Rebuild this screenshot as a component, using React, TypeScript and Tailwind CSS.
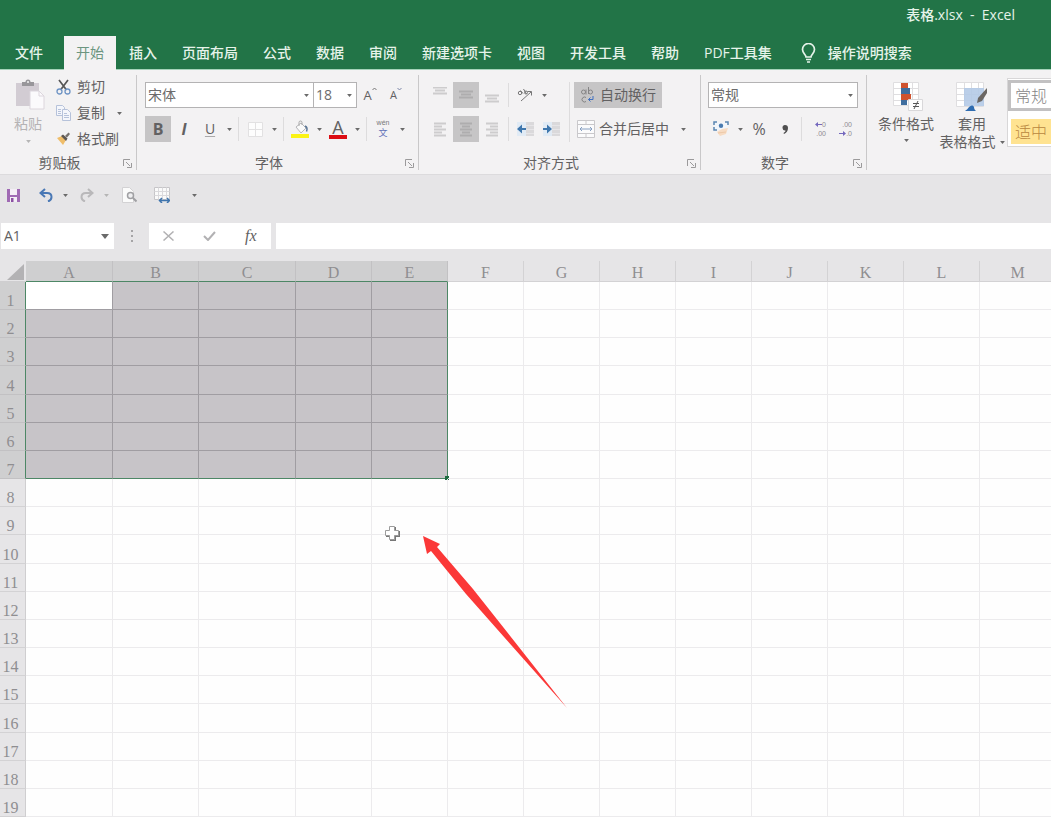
import { useState, type ReactNode } from "react";
import clsx from "clsx";

const TABS = ["插入", "页面布局", "公式", "数据", "审阅", "新建选项卡", "视图", "开发工具", "帮助", "PDF工具集"];

const COLUMNS = [
  { name: "A", width: 87 },
  { name: "B", width: 86 },
  { name: "C", width: 97 },
  ...["D", "E", "F", "G", "H", "I", "J", "K", "L", "M"].map((name) => ({ name, width: 76 })),
];

const ROWS = Array.from({ length: 19 }, (_, i) => i + 1);
const LAST_COL = 4;
const LAST_ROW = 7;

function Arrow({ big, light }: { big?: boolean; light?: boolean }) {
  return (
    <svg
      width={big ? 8 : 5}
      height={big ? 5 : 3}
      viewBox="0 0 8 5"
      className={clsx("shrink-0", light ? "fill-[#b5b5b5]" : "fill-[#6a6a6a]")}
    >
      <path d="M0 0h8L4 5z" />
    </svg>
  );
}

function DropButton({ label, light }: { label: string; light?: boolean }) {
  return (
    <button type="button" aria-label={label} className="flex h-[26px] w-3 items-center justify-center">
      <Arrow light={light} />
    </button>
  );
}

function IconButton({ label, active, children }: { label: string; active?: boolean; children: ReactNode }) {
  return (
    <button
      type="button"
      aria-label={label}
      className={clsx("flex h-[26px] w-[26px] shrink-0 items-center justify-center", active && "bg-[#c6c5c6]")}
    >
      {children}
    </button>
  );
}

function Sep({ tall }: { tall?: boolean }) {
  return <span className={clsx("mx-[3px] w-px shrink-0 bg-[#dddcdd]", tall ? "h-15" : "h-6")} />;
}

function ComboBox({ label, initial, className }: { label: string; initial: string; className: string }) {
  const [value, setValue] = useState(initial);
  return (
    <div className={clsx("flex h-[26px] items-center border border-[#b4b3b4] bg-white pr-0.5", className)}>
      <input
        aria-label={label}
        value={value}
        onChange={(e) => setValue(e.target.value)}
        className="w-full min-w-0 bg-transparent px-0.5 text-sm text-[#6c6b6c] outline-none"
      />
      <button type="button" aria-label={`${label}列表`} className="px-0.5">
        <Arrow />
      </button>
    </div>
  );
}

function Group({ title, className, children }: { title: string; className: string; children: ReactNode }) {
  return (
    <section className={clsx("flex shrink-0 flex-col pt-3", className)}>
      <div className="h-[73px]">{children}</div>
      <div className="flex h-[22px] items-center pr-px">
        <span className="flex-1 text-center">{title}</span>
        <button type="button" aria-label={`${title}设置`} className="flex w-4 justify-center">
          <svg width="9" height="9" viewBox="0 0 9 9" fill="none" stroke="#9b9a9b">
            <path d="M.5 7V.5H7M3 3l4 4" />
            <path d="M8.500 4v4.500H4" />
          </svg>
        </button>
      </div>
    </section>
  );
}

function GroupLine() {
  return <span className="mt-[5px] h-[95px] w-px shrink-0 bg-[#c9c8c9]" />;
}

function Lines({ rows, color = "#cdcccd" }: { rows: number[][]; color?: string }) {
  return (
    <svg width="14" height="16" viewBox="0 0 14 16" stroke={color} strokeWidth="2">
      {rows.map(([x1, x2, y]) => (
        <path key={y} d={`M${x1} ${y}.500H${x2}`} />
      ))}
    </svg>
  );
}

function ClipboardGroup() {
  return (
    <Group title="剪贴板" className="w-[136px]">
      <div className="-mt-2 flex">
        <button type="button" className="flex w-[56px] flex-col items-center pt-1 text-[#b5b3b5]">
          <svg width="30" height="32" viewBox="0 0 30 32" className="ml-1">
            <path d="M1 5h23v23H1z" fill="#d2ccd3" />
            <path d="M7 8V4h3.500a2.500 2.500 0 0 1 5 0H19v4z" fill="#98969a" />
            <circle cx="13" cy="4" r="1" fill="#f2f2f2" />
            <path d="M15 13h9l5 5v13H15z" fill="#fbfafc" stroke="#dcd6dd" />
            <path d="M24 13v5h5" fill="none" stroke="#dcd6dd" />
          </svg>
          <span className="mt-1 leading-5">粘贴</span>
          <span className="mt-1.5">
            <Arrow light />
          </span>
        </button>
        <div className="flex flex-col">
          <button type="button" className="flex h-[26px] items-center gap-1.5">
            <svg width="15" height="16" viewBox="0 0 15 16" fill="none">
              <path d="M3 1l7.500 10M12 1L4.500 11" stroke="#555" strokeWidth="1.700" />
              <circle cx="3.500" cy="12.500" r="2.500" stroke="#6d93c4" strokeWidth="1.300" />
              <circle cx="11.500" cy="12.500" r="2.500" stroke="#6d93c4" strokeWidth="1.300" />
            </svg>
            剪切
          </button>
          <div className="flex items-center">
            <button type="button" className="flex h-[26px] items-center gap-1.5">
              <svg width="15" height="16" viewBox="0 0 15 16" fill="#f4f6fb" stroke="#b6c2da">
                <path d="M.5.5h6l2 2v8h-8z" />
                <path d="M2 4.500h3M2 6.500h3M2 8.500h3" />
                <path d="M6.500 4.500h5l3 3v8h-8z" />
                <path d="M8 8.500h3M8 10.500h5M8 12.500h5" />
              </svg>
              复制
            </button>
            <span className="ml-2">
              <DropButton label="复制选项" />
            </span>
          </div>
          <button type="button" className="flex h-[26px] items-center gap-1.5">
            <svg width="15" height="14" viewBox="0 0 15 14">
              <path d="M1 6l5-2 4 4-3 5z" fill="#efbd6a" />
              <path d="M5 4l2-1.500 4.500 4L10 9z" fill="#5d5752" />
              <path d="M9 4l3.500-3.500L14 2l-3 3.500z" fill="#77716d" />
            </svg>
            格式刷
          </button>
        </div>
      </div>
    </Group>
  );
}

function FontGroup() {
  return (
    <Group title="字体" className="w-[281px]">
      <div className="flex flex-col gap-2 pl-2">
        <div className="flex">
          <ComboBox label="字体" initial="宋体" className="w-[169px]" />
          <ComboBox label="字号" initial="18" className="-ml-px w-11" />
          <IconButton label="增大字号">
            <span className="text-[13px]">A</span>
            <svg width="5" height="4" viewBox="0 0 5 4" className="mb-3" fill="none" stroke="#777">
              <path d="M.5 3l2-2 2 2" />
            </svg>
          </IconButton>
          <IconButton label="减小字号">
            <span className="text-[11px]">A</span>
            <svg width="5" height="4" viewBox="0 0 5 4" className="mb-3" fill="none" stroke="#7d86a8">
              <path d="M.5 1l2 2 2-2" />
            </svg>
          </IconButton>
        </div>
        <div className="flex items-center">
          <IconButton label="加粗" active>
            <span className="text-base font-bold">B</span>
          </IconButton>
          <IconButton label="倾斜">
            <span className="text-base font-bold italic">I</span>
          </IconButton>
          <IconButton label="下划线">
            <span className="underline decoration-[#aaa9aa] underline-offset-2">U</span>
          </IconButton>
          <DropButton label="下划线样式" />
          <Sep />
          <IconButton label="边框">
            <svg width="15" height="15" viewBox="0 0 15 15" fill="#fdfdfd" stroke="#e2e1e2">
              <path d="M.5.5h14v14H.5zM7.500 0v15M0 7.500h15" />
            </svg>
          </IconButton>
          <DropButton label="边框样式" />
          <Sep />
          <IconButton label="填充颜色">
            <svg width="19" height="18" viewBox="0 0 19 18">
              <path d="M5 7l5-4 5 5-5 5z" fill="#fafafa" stroke="#b5b5b8" />
              <path d="M8 6V2.500a1.500 1.500 0 0 1 3 0V5" fill="none" stroke="#aaa" />
              <path d="M14 6c2 1 2.500 3 1.500 5.500" fill="none" stroke="#5c7796" strokeWidth="1.500" />
              <path d="M0 14h18v4H0z" fill="#fbf315" />
            </svg>
          </IconButton>
          <DropButton label="填充颜色列表" />
          <IconButton label="字体颜色">
            <span className="flex w-[18px] flex-col items-center border-b-4 border-[#dc0d14] text-lg leading-[15px]">
              A
            </span>
          </IconButton>
          <DropButton label="字体颜色列表" />
          <Sep />
          <IconButton label="拼音指南">
            <span className="flex flex-col items-center font-['Liberation_Sans','Noto_Sans_CJK_SC',sans-serif]">
              <span className="text-[7px] leading-2 text-[#777]">wén</span>
              <span className="text-[9px] leading-[13px] text-[#5f70b8]">文</span>
            </span>
          </IconButton>
          <DropButton label="拼音选项" />
        </div>
      </div>
    </Group>
  );
}

function IndentIcon({ right }: { right?: boolean }) {
  return (
    <svg width="17" height="14" viewBox="0 0 17 14">
      <path d="M9 0h8v14H9z" fill="#dad9db" />
      <path d="M9 3.500h8M9 7.500h8M9 11.500h8" stroke="#e6e5e7" />
      <path d="M0 0h9v14H0z" fill="#e1ebf5" />
      <path
        d={right ? "M0 6h4V2.500L9 7l-5 4.500V8H0z" : "M9 6H5V2.500L0 7l5 4.500V8h4z"}
        fill="#3f77ad"
      />
    </svg>
  );
}

function AlignGroup() {
  return (
    <Group title="对齐方式" className="w-[281px]">
      <div className="flex pl-2">
        <div className="flex flex-col gap-2">
          <div className="flex items-center">
            <IconButton label="顶端对齐">
              <Lines rows={[[0, 14, 0], [2, 12, 3], [0, 14, 6]]} />
            </IconButton>
            <IconButton label="垂直居中" active>
              <Lines color="#aeadae" rows={[[0, 14, 4], [2, 12, 7], [0, 14, 10]]} />
            </IconButton>
            <IconButton label="底端对齐">
              <Lines rows={[[0, 14, 8], [2, 12, 11], [0, 14, 14]]} />
            </IconButton>
            <Sep />
            <IconButton label="方向">
              <svg width="16" height="14" viewBox="0 0 16 14" fill="none" stroke="#777">
                <path d="M4 13L14 4M10.500 3.500h4v4" />
                <circle cx="3" cy="5" r="1.700" />
                <path d="M3.500 2.500l2.500 3M6.500 1l3 5" />
                <circle cx="9" cy="4.500" r="1.500" />
              </svg>
            </IconButton>
            <DropButton label="方向选项" />
          </div>
          <div className="flex items-center">
            <IconButton label="左对齐">
              <Lines rows={[[1, 13, 2], [1, 9, 5], [1, 13, 8], [1, 9, 11], [1, 13, 14]]} />
            </IconButton>
            <IconButton label="居中" active>
              <Lines color="#aeadae" rows={[[1, 13, 2], [3, 11, 5], [1, 13, 8], [3, 11, 11], [1, 13, 14]]} />
            </IconButton>
            <IconButton label="右对齐">
              <Lines rows={[[1, 13, 2], [5, 13, 5], [1, 13, 8], [5, 13, 11], [1, 13, 14]]} />
            </IconButton>
            <Sep />
            <IconButton label="减少缩进量">
              <IndentIcon />
            </IconButton>
            <IconButton label="增加缩进量">
              <IndentIcon right />
            </IconButton>
          </div>
        </div>
        <span className="ml-0.5 flex">
          <Sep tall />
        </span>
        <div className="ml-px flex flex-col items-start gap-2">
          <button type="button" className="flex h-[26px] w-[88px] items-center gap-1.5 bg-[#c6c5c6] pl-1.5">
            <svg width="14" height="16" viewBox="0 0 14 16" fill="none" stroke="#858485">
              <circle cx="3.500" cy="5" r="2" />
              <path d="M6 2.500V7.500M8.500 0v7" />
              <circle cx="10.500" cy="5" r="2" />
              <path d="M6 10.500a2.500 2.500 0 1 0 0 4" />
              <path d="M13 9v3.500H8.500M10.500 10.500l-2 2 2 2" stroke="#3f6fc0" />
            </svg>
            自动换行
          </button>
          <div className="flex items-center gap-2">
            <button type="button" className="flex h-[26px] items-center gap-1 pl-[3px]">
              <svg width="18" height="18" viewBox="0 0 18 18" fill="#fbfbfc" stroke="#c9c8cb">
                <path d="M.5.5h17v17H.5z" />
                <path d="M.5 4.500h17M.5 13.500h17M9 .5v4M9 13.500v4" />
                <path d="M3 9h12M5 7L3 9l2 2M13 7l2 2-2 2" fill="none" stroke="#87a0c2" />
              </svg>
              合并后居中
            </button>
            <DropButton label="合并选项" />
          </div>
        </div>
      </div>
    </Group>
  );
}

function DecimalIcon({ more }: { more?: boolean }) {
  const arrow = (
    <svg width="7" height="5" viewBox="0 0 7 5" fill="#7468bd">
      <path d={more ? "M0 2h4V0l3 2.500L4 5V3H0z" : "M7 2H3V0L0 2.500 3 5V3h4z"} />
    </svg>
  );
  return (
    <span className="flex w-4 flex-col items-end font-['Liberation_Sans',sans-serif] text-[7px] leading-[9px] text-[#8d8c91]">
      <span className="flex items-center">
        {!more && arrow}
        {more ? ".00" : "0"}
      </span>
      <span className="flex items-center">
        {more && arrow}
        {more ? ".0" : ".00"}
      </span>
    </span>
  );
}

function NumberGroup() {
  return (
    <Group title="数字" className="w-[165px]">
      <div className="flex flex-col gap-2 pr-2 pl-[7px]">
        <ComboBox label="数字格式" initial="常规" className="w-full" />
        <div className="flex items-center">
          <IconButton label="会计数字格式">
            <svg width="17" height="16" viewBox="0 0 17 16">
              <path d="M1.500 1.500h13v7h-13z" fill="#f2f6fb" />
              <path d="M4 1H1v3M12 1h3v3M1 6v3h3" fill="none" stroke="#5b86b3" strokeWidth="1.500" />
              <circle cx="8" cy="4.700" r="2.200" fill="#4a7bb0" />
              <path d="M4 11l5-3 6-1-2 6-6 2z" fill="#f7dcc3" />
              <path d="M5 12l8-1" stroke="#edc9a9" />
            </svg>
          </IconButton>
          <DropButton label="会计格式列表" />
          <IconButton label="百分比样式">
            <span className="text-base">%</span>
          </IconButton>
          <IconButton label="千位分隔样式">
            <svg width="7" height="9" viewBox="0 0 7 9" fill="#4f4f4f">
              <path d="M3 0a3 3 0 0 1 3 3c0 3-1.500 5-4 6l-.5-1C3 7 3.500 6.500 3.500 5.500A2.700 2.700 0 0 1 3 0z" />
            </svg>
          </IconButton>
          <Sep />
          <IconButton label="增加小数位数">
            <DecimalIcon />
          </IconButton>
          <IconButton label="减少小数位数">
            <DecimalIcon more />
          </IconButton>
        </div>
      </div>
    </Group>
  );
}

function StylesGroup() {
  return (
    <section className="flex min-w-0 flex-1 overflow-hidden pt-2">
      <button type="button" className="ml-2 flex w-[62px] shrink-0 flex-col items-center pt-1 leading-[18px]">
        <svg width="30" height="30" viewBox="0 0 30 30" className="ml-1">
          <path d="M.5.5h25v23H.5z" fill="#fff" stroke="#dfdee0" />
          <path d="M0 6.500h26M0 12.500h26M0 18.500h26M19.500 0v24" stroke="#dfdee0" />
          <path d="M8 1h7v5H8zM8 12h10v6H8z" fill="#d0532f" />
          <path d="M8 6h9v6H8zM8 18h6v5H8z" fill="#3f6e9f" />
          <path d="M15.500 17.500h14v11h-14z" fill="#fdfdfd" stroke="#d9d8da" />
          <path d="M20 21.500h6M20 24.500h6M25 19l-4 8" stroke="#555" />
        </svg>
        <span className="mt-[3px] whitespace-nowrap">条件格式</span>
        <span className="mt-1.5">
          <Arrow />
        </span>
      </button>
      <button type="button" className="flex w-[70px] shrink-0 flex-col items-center pt-1 leading-[18px]">
        <svg width="32" height="30" viewBox="0 0 32 30">
          <path d="M.5.5h27v24H.5z" fill="#fff" stroke="#dfdee0" />
          <path d="M0 6.500h28M0 12.500h28M0 18.500h28M8.500 0v24M15.500 0v24M22.500 0v24" stroke="#dfdee0" />
          <path d="M8 6h20v18H8z" fill="#b4cae7" opacity=".9" />
          <path d="M31 6v5l-5 8-5 2 1-5z" fill="#6a6663" />
          <path d="M9 29c1-1 3-2 4-4 2-2 4-2 5 0 0 2 1 3 2 4z" fill="#2f6cb0" />
        </svg>
        <span className="mt-[3px]">套用</span>
        <span className="flex items-center gap-1 whitespace-nowrap">
          表格格式
          <Arrow />
        </span>
      </button>
      <div className="flex h-[69px] flex-1 flex-col gap-2 overflow-hidden border border-r-0 border-[#d8d7d8] bg-white text-base">
        <button
          type="button"
          className="mt-px h-[31px] w-20 shrink-0 border-[3px] border-[#c2c1c2] bg-white pl-1 text-left leading-6 font-light text-[#858485]"
        >
          常规
        </button>
        <button
          type="button"
          className="ml-[3px] h-[25px] w-20 shrink-0 bg-[#ffe391] pl-1 text-left leading-6 font-light text-[#b9873f]"
        >
          适中
        </button>
      </div>
    </section>
  );
}

function QuickAccess() {
  return (
    <div className="flex h-12 shrink-0 items-center pb-2">
      <IconButton label="保存">
        <svg width="13" height="13" viewBox="0 0 13 13">
          <path d="M0 0h13v13H0z" fill="#a06ab4" />
          <path d="M3 0h7v6H3zM3 8h7v5H3z" fill="#f4eef6" />
          <path d="M4 9h2.500v4H4z" fill="#8b50a2" />
        </svg>
      </IconButton>
      <span className="ml-[7px] flex">
        <IconButton label="撤消">
          <svg width="14" height="14" viewBox="0 0 14 14" fill="none" stroke="#4a78b5" strokeWidth="2">
            <path d="M6 1L1.500 5 6 9M2 5h6c3 0 4.500 1.500 4.500 4 0 2-1 3.500-3.500 4.500" />
          </svg>
        </IconButton>
      </span>
      <DropButton label="撤消列表" />
      <span className="ml-[3px] flex">
        <IconButton label="恢复">
          <svg width="14" height="14" viewBox="0 0 14 14" fill="none" stroke="#b9b8ba" strokeWidth="2">
            <path d="M8 1l4.500 4L8 9M12 5H6C3 5 1.500 6.500 1.500 9c0 2 1 3.500 3.500 4.500" />
          </svg>
        </IconButton>
      </span>
      <DropButton label="恢复列表" light />
      <span className="ml-1 flex gap-[7px]">
        <IconButton label="打印预览">
          <svg width="15" height="16" viewBox="0 0 15 16" fill="none">
            <path d="M.5.5h7l4 4v11H.5z" fill="#fbfbfb" stroke="#d3d2d4" />
            <circle cx="8.500" cy="8.500" r="3" fill="#eeeef0" stroke="#a0a0a3" strokeWidth="1.500" />
            <path d="M11 11l3.500 3.500" stroke="#a0a0a3" strokeWidth="2" />
          </svg>
        </IconButton>
        <IconButton label="列宽">
          <svg width="16" height="16" viewBox="0 0 16 16" fill="none">
            <path d="M.5.500h15v12H.5z" fill="#fafafa" stroke="#c6c5c8" />
            <path d="M.5 4.500h15M.5 8.500h15M4.500.5v12M8.500.5v12M12.500.5v12" stroke="#dad9dc" />
            <path d="M5 13.500h11M8 11l-2.500 2.500L8 16M13 11l2.500 2.500L13 16" stroke="#3f74ad" strokeWidth="1.500" />
          </svg>
        </IconButton>
        <span className="ml-1.5 flex">
          <DropButton label="自定义快速访问工具栏" />
        </span>
      </span>
    </div>
  );
}

function FormulaBar() {
  const [name, setName] = useState("A1");
  const [formula, setFormula] = useState("");
  return (
    <div className="flex h-[26px] shrink-0 items-stretch">
      <div className="ml-px flex w-[113px] items-center bg-white pr-[5px]">
        <input
          aria-label="名称框"
          value={name}
          onChange={(e) => setName(e.target.value)}
          className="w-full min-w-0 bg-transparent pl-[3px] text-sm outline-none"
        />
        <button type="button" aria-label="名称列表">
          <Arrow big />
        </button>
      </div>
      <span className="flex w-[35px] flex-col items-center justify-center gap-[3px]">
        <i className="h-0.5 w-0.5 bg-[#a5a4a6]" />
        <i className="h-0.5 w-0.5 bg-[#a5a4a6]" />
        <i className="h-0.5 w-0.5 bg-[#a5a4a6]" />
      </span>
      <div className="flex w-[122px] items-center justify-around bg-white">
        <button type="button" aria-label="取消">
          <svg width="11" height="10" viewBox="0 0 11 10" stroke="#b2b1b3" strokeWidth="1.500">
            <path d="M.5.5l10 9M10.500.5l-10 9" />
          </svg>
        </button>
        <button type="button" aria-label="输入">
          <svg width="13" height="10" viewBox="0 0 13 10" fill="none" stroke="#b2b1b3" strokeWidth="2">
            <path d="M1 5l4 4 7-8" />
          </svg>
        </button>
        <button type="button" className="font-['Liberation_Serif',serif] text-base leading-6 italic">
          fx
        </button>
      </div>
      <input
        aria-label="编辑栏"
        value={formula}
        onChange={(e) => setFormula(e.target.value)}
        className="ml-[5px] min-w-0 flex-1 bg-white px-1 text-sm outline-none"
      />
    </div>
  );
}

function Sheet() {
  return (
    <main className="relative mt-3 min-h-0 flex-1 overflow-hidden bg-[#fefefe]">
      <table className="h-full w-max table-fixed border-separate border-spacing-0 font-['Liberation_Serif','Noto_Sans_CJK_SC',serif] text-base leading-5 text-[#8f8e91]">
        <colgroup>
          <col style={{ width: 26 }} />
          {COLUMNS.map((col) => (
            <col key={col.name} style={{ width: col.width }} />
          ))}
        </colgroup>
        <thead>
          <tr className="h-[21px]">
            <th className="border-b border-[#cfced0] bg-[#e6e5e7] p-0" aria-label="全选">
              <svg width="18" height="16" viewBox="0 0 18 16" className="mt-0.5 ml-[7px] fill-[#b3b2b4]">
                <path d="M17 0v16H0z" />
              </svg>
            </th>
            {COLUMNS.map((col, c) => (
              <th
                key={col.name}
                className={clsx(
                  "border-r border-b p-0 font-normal",
                  c <= LAST_COL
                    ? "border-r-[#c2c1c3] border-b-[#4d8766] bg-[#cfcfd0]"
                    : "border-r-[#d3d2d4] border-b-[#d3d2d4] bg-[#e6e5e7]"
                )}
              >
                <span className="block h-5 leading-[23px]">{col.name}</span>
              </th>
            ))}
          </tr>
        </thead>
        <tbody>
          {ROWS.map((row) => (
            <tr key={row}>
              <th
                className={clsx(
                  "border-r border-b p-0 pr-1 text-center align-bottom font-normal",
                  row <= LAST_ROW
                    ? "border-r-[#4d8766] border-b-[#c2c1c3] bg-[#cfcfd0]"
                    : "border-r-[#cfced0] border-b-[#d3d2d4] bg-[#e6e5e7]"
                )}
              >
                <span className="block h-[18px]">{row}</span>
              </th>
              {COLUMNS.map((col, c) => {
                const selected = row <= LAST_ROW && c <= LAST_COL;
                return (
                  <td
                    key={col.name}
                    className={clsx(
                      "relative border-r border-b p-0",
                      !selected && "border-[#ecebed]",
                      selected && (row === 1 && c === 0 ? "bg-white" : "bg-[#c7c4c8]"),
                      selected && (c === LAST_COL ? "border-r-[#4d8766]" : "border-r-[#a09da2]"),
                      selected && (row === LAST_ROW ? "border-b-[#4d8766]" : "border-b-[#a09da2]")
                    )}
                  >
                    {row === LAST_ROW && c === LAST_COL && (
                      <span className="absolute -right-0.5 -bottom-0.5 h-1 w-1 bg-[#1d6b40]" />
                    )}
                  </td>
                );
              })}
            </tr>
          ))}
        </tbody>
      </table>

      <svg className="absolute top-[264px] left-[384px]" width="17" height="17" viewBox="0 0 17 17">
        <path d="M6 2h6v4h4v6h-4v4H6v-4H2V6h4z" fill="#777" />
        <path d="M5.500 1.500h5v4h4v5h-4v4h-5v-4h-4v-5h4z" fill="#fff" stroke="#9c9c9c" />
      </svg>
      <svg className="absolute top-[275px] left-[423px]" width="145" height="173" viewBox="0 0 145 173" fill="#fb3838">
        <path d="M0 0l17 8-3 3L50 53l94 119L43 58 8 15l-4 3z" />
      </svg>
    </main>
  );
}

export default function App() {
  return (
    <div className="flex h-screen flex-col overflow-hidden bg-[#e6e5e7] font-['Open_Sans','Noto_Sans_CJK_SC',sans-serif] text-sm text-[#626162]">
      <header className="shrink-0 bg-[#227447] text-[#e6f3ea]">
        <div className="flex h-9 items-center justify-end pr-9 pb-1.5 font-medium whitespace-pre">
          表格.xlsx  -  Excel
        </div>
        <nav className="flex h-[34px] items-stretch gap-px border-b border-[#a5d3b9] pl-[3px] font-medium whitespace-nowrap">
          <button type="button" className="px-3">
            文件
          </button>
          <button type="button" className="-mb-px ml-2 bg-[#f3f2f3] px-3 font-normal text-[#6c9580]">
            开始
          </button>
          {TABS.map((tab) => (
            <button key={tab} type="button" className="px-3">
              {tab}
            </button>
          ))}
          <button type="button" className="ml-1 flex items-center gap-3 pl-3">
            <svg width="15" height="20" viewBox="0 0 15 20" fill="none" stroke="#e6f3ea" strokeWidth="1.700">
              <path d="M5 14c0-2-3.500-4-3.500-7.500a6 6 0 0 1 12 0C13.500 10 10 12 10 14z" />
              <path d="M5 16.500h5M6 19h3" />
            </svg>
            操作说明搜索
          </button>
        </nav>
      </header>

      <div className="flex h-[105px] shrink-0 overflow-hidden border-b border-[#dcdbdd] bg-[#f3f2f3]">
        <ClipboardGroup />
        <GroupLine />
        <FontGroup />
        <GroupLine />
        <AlignGroup />
        <GroupLine />
        <NumberGroup />
        <GroupLine />
        <StylesGroup />
      </div>

      <QuickAccess />
      <FormulaBar />
      <Sheet />
    </div>
  );
}
